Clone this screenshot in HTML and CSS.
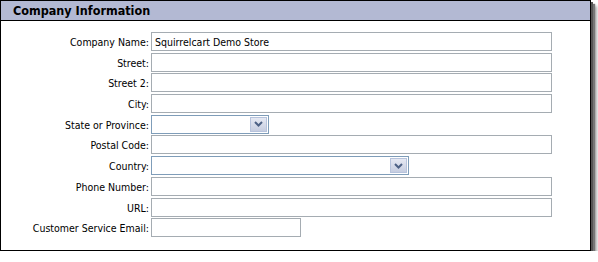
FILE: index.html
```html
<!DOCTYPE html>
<html lang="en">
<head>
    <meta charset="UTF-8">
    <title>Company Information</title>
    <link rel="stylesheet" href="styles.css">
</head>
<body>
    <div class="panel">
        <div class="panel-title">Company Information</div>
        <form class="form">
            <label for="name">Company Name:</label>
            <input type="text" id="name" class="wide" value="Squirrelcart Demo Store">

            <label for="street">Street:</label>
            <input type="text" id="street" class="wide">

            <label for="street2">Street 2:</label>
            <input type="text" id="street2" class="wide">

            <label for="city">City:</label>
            <input type="text" id="city" class="wide">

            <label>State or Province:</label>
            <div class="select state">
                <span class="select-btn">
                    <svg width="9" height="6" viewBox="0 0 9 6"><path d="M1 1 L4.5 4.5 L8 1" fill="none" stroke="#4d6185" stroke-width="2"/></svg>
                </span>
            </div>

            <label for="zip">Postal Code:</label>
            <input type="text" id="zip" class="wide">

            <label>Country:</label>
            <div class="select country">
                <span class="select-btn">
                    <svg width="9" height="6" viewBox="0 0 9 6"><path d="M1 1 L4.5 4.5 L8 1" fill="none" stroke="#4d6185" stroke-width="2"/></svg>
                </span>
            </div>

            <label for="phone">Phone Number:</label>
            <input type="text" id="phone" class="wide">

            <label for="url">URL:</label>
            <input type="text" id="url" class="wide">

            <label for="email">Customer Service Email:</label>
            <input type="text" id="email" class="short">
        </form>
    </div>
</body>
</html>
```

FILE: styles.css
```css
body {
    margin: 0;
    background: #fff;
    font-family: "DejaVu Sans Condensed", "DejaVu Sans", sans-serif;
}
.panel {
    width: 589px;
    height: 249px;
    border: 1px solid #000;
    background: #fff;
    box-shadow: 2px 2px 0 #555, 4px 4px 1px #777, 6px 6px 3px #aaa;
}
.panel-title {
    height: 19px;
    line-height: 20px;
    background: #b3b9d3;
    border-bottom: 1px solid #000;
    padding-left: 12px;
    font-size: 12.5px;
    font-weight: bold;
    color: #000;
}
.form {
    display: grid;
    grid-template-columns: 148px 1fr;
    column-gap: 2px;
    row-gap: 1.7px;
    padding-top: 11px;
    align-items: center;
}
label {
    text-align: right;
    font-size: 10.5px;
    padding-top: 1px;
    color: #000;
}
input {
    box-sizing: border-box;
    height: 19px;
    border: 1px solid #a5acb2;
    padding: 0 3px;
    font-family: inherit;
    font-size: 10.5px;
    margin: 0;
}
.wide {
    width: 401px;
}
.short {
    width: 150px;
}
.select {
    box-sizing: border-box;
    height: 19px;
    border: 1px solid #7f9db9;
    display: flex;
    justify-content: flex-end;
    padding: 1px;
}
.state {
    width: 118px;
}
.country {
    width: 258px;
}
.select-btn {
    width: 15px;
    border: 1px solid #b7c3dc;
    background: linear-gradient(#e6e9f3, #c6cde0);
    display: flex;
    align-items: center;
    justify-content: center;
}
```
